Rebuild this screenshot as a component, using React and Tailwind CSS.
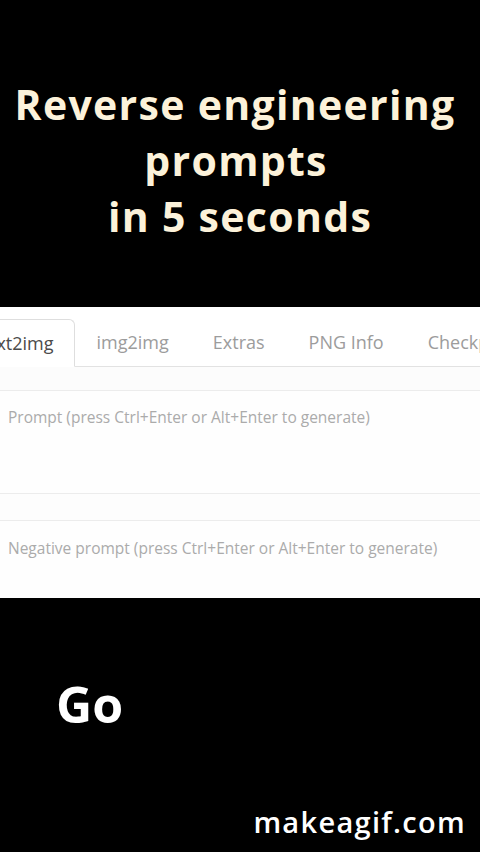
import React from "react";

const tabs = ["img2img", "Extras", "PNG Info", "Checkpoint Merger"];

const App = () => {
  return (
    <div
      className="w-[480px] h-[852px] bg-black overflow-hidden flex flex-col"
      style={{ fontFamily: '"Open Sans", "Noto Sans", sans-serif' }}
    >
      <div className="pt-[76px] h-[307px] flex flex-col items-center text-[#fcf2da] font-bold text-[41px] leading-[56px] tracking-[1.3px]">
        <div className="pr-[10px]">Reverse engineering</div>
        <div className="pr-[8px]">prompts</div>
        <div>in 5 seconds</div>
      </div>

      <div className="h-[291px] bg-[#fcfcfc] flex flex-col overflow-hidden">
        <div className="pt-[12px] flex items-end border-b border-[#e2e2e2] bg-white whitespace-nowrap">
          <div className="-ml-[31px] -mb-px h-[48px] px-[20px] flex items-center bg-white border border-b-white border-[#dedede] rounded-t-md text-[18px] text-[#4b4b4b]">
            txt2img
          </div>
          <div className="flex items-center gap-[44px] pl-[22px] h-[47px] text-[18px] text-[#9c9c9c]">
            {tabs.map((t) => (
              <span key={t}>{t}</span>
            ))}
          </div>
        </div>
        <div className="h-[23px] bg-[#fcfcfc]"></div>
        <div className="h-[104px] border-t border-b border-[#ececec] bg-[#fefefe] px-[8px] pt-[15px] text-[15.5px] text-[#ababab]">
          Prompt (press Ctrl+Enter or Alt+Enter to generate)
        </div>
        <div className="h-[26px] bg-[#fdfdfd]"></div>
        <div className="flex-1 border-t border-[#ececec] bg-[#fefefe] px-[8px] pt-[16px] text-[15.5px] text-[#ababab]">
          Negative prompt (press Ctrl+Enter or Alt+Enter to generate)
        </div>
      </div>

      <div className="flex-1 flex flex-col">
        <div className="pl-[56px] pt-[78px] text-white font-bold text-[50px] leading-[56px]">
          Go
        </div>
        <div className="mt-auto mb-[12px] pr-[14px] flex justify-end text-white font-semibold text-[29px] leading-[36px] tracking-[1.3px]">
          makeagif.com
        </div>
      </div>
    </div>
  );
};

export default App;
